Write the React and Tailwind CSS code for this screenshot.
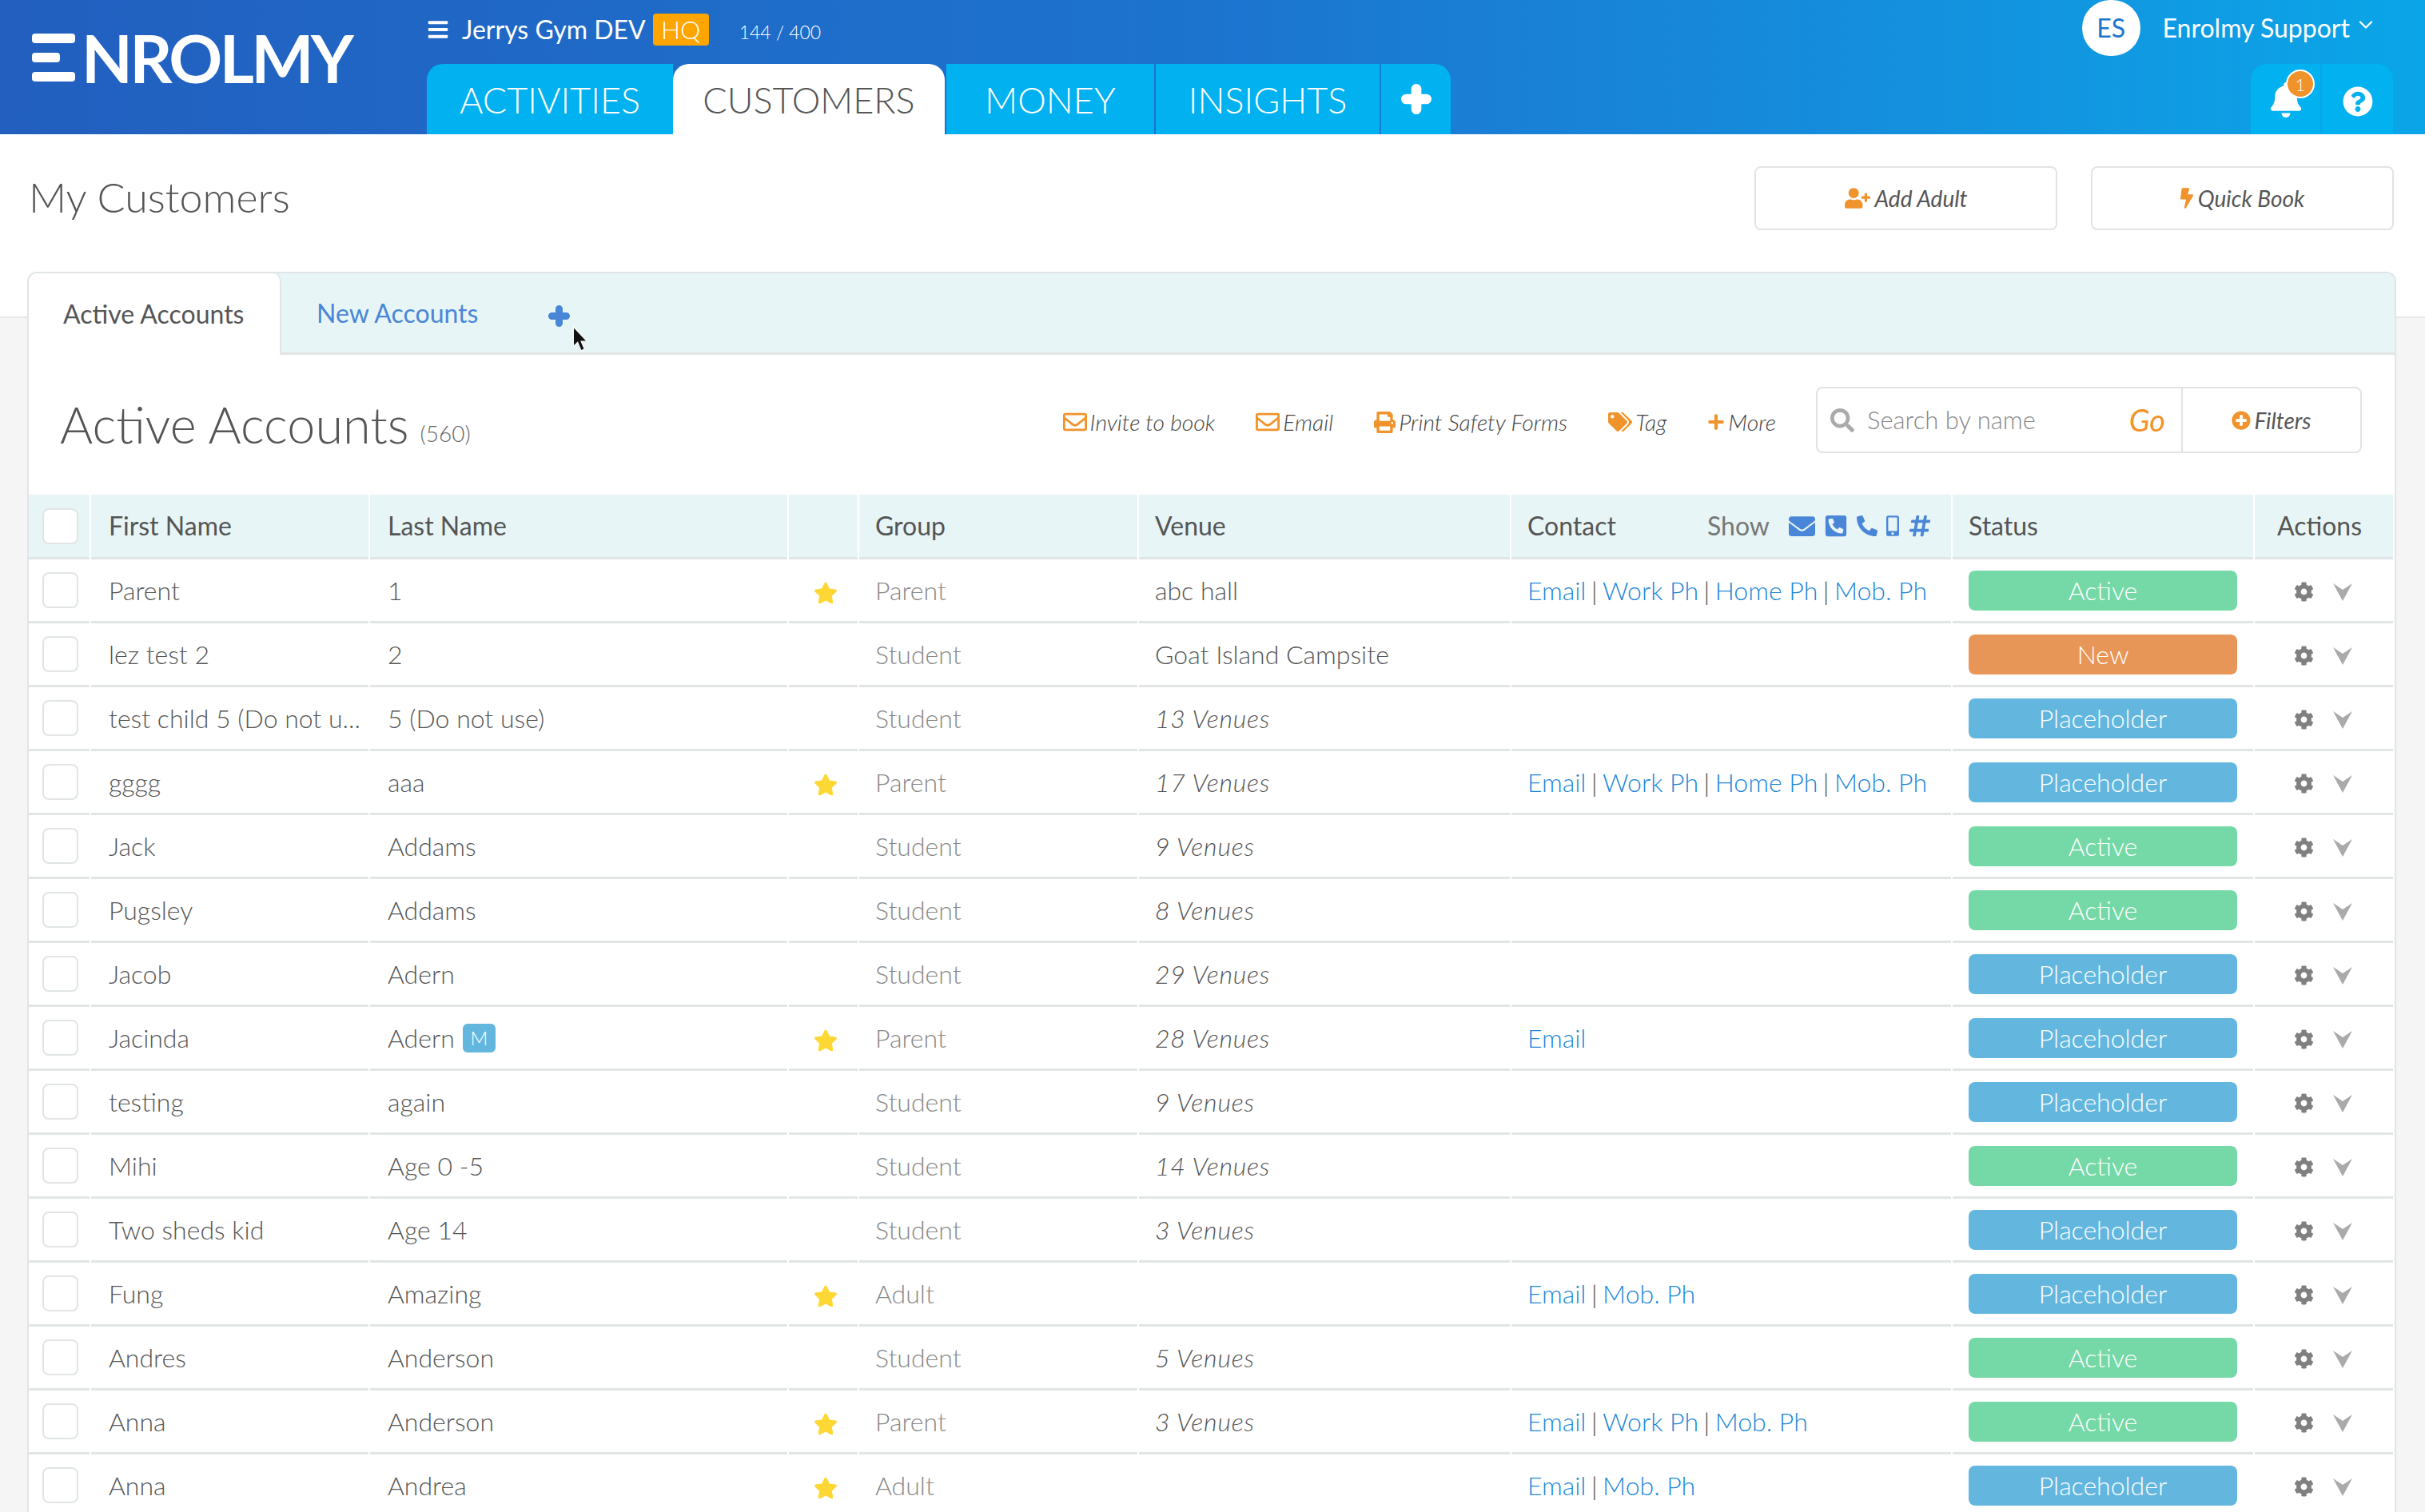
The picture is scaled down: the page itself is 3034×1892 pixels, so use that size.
import React from 'react'
import {
  FaBars, FaBell, FaBolt, FaCog, FaEnvelope, FaHashtag, FaMobileAlt, FaPhoneAlt, FaPhoneSquareAlt,
  FaPlusCircle, FaPrint, FaQuestionCircle, FaRegEnvelope, FaSearch, FaStar, FaTags, FaUserPlus, FaPlus,
} from 'react-icons/fa'
import { ChevronDown } from 'lucide-react'

const gridCols = 'grid grid-cols-[76px_347px_522px_86px_348px_464px_550px_376px_173px] gap-x-[2px]'

const statusColors = {
  Active: 'bg-[#75d8a7]',
  New: 'bg-[#e89658]',
  Placeholder: 'bg-[#63b7df]',
}

const rows = [
  { first: 'Parent', last: '1', star: true, group: 'Parent', venue: 'abc hall', contact: ['Email', 'Work Ph', 'Home Ph', 'Mob. Ph'], status: 'Active' },
  { first: 'lez test 2', last: '2', group: 'Student', venue: 'Goat Island Campsite', contact: [], status: 'New' },
  { first: 'test child 5 (Do not u...', last: '5 (Do not use)', group: 'Student', venues: '13 Venues', contact: [], status: 'Placeholder' },
  { first: 'gggg', last: 'aaa', star: true, group: 'Parent', venues: '17 Venues', contact: ['Email', 'Work Ph', 'Home Ph', 'Mob. Ph'], status: 'Placeholder' },
  { first: 'Jack', last: 'Addams', group: 'Student', venues: '9 Venues', contact: [], status: 'Active' },
  { first: 'Pugsley', last: 'Addams', group: 'Student', venues: '8 Venues', contact: [], status: 'Active' },
  { first: 'Jacob', last: 'Adern', group: 'Student', venues: '29 Venues', contact: [], status: 'Placeholder' },
  { first: 'Jacinda', last: 'Adern', badge: true, star: true, group: 'Parent', venues: '28 Venues', contact: ['Email'], status: 'Placeholder' },
  { first: 'testing', last: 'again', group: 'Student', venues: '9 Venues', contact: [], status: 'Placeholder' },
  { first: 'Mihi', last: 'Age 0 -5', group: 'Student', venues: '14 Venues', contact: [], status: 'Active' },
  { first: 'Two sheds kid', last: 'Age 14', group: 'Student', venues: '3 Venues', contact: [], status: 'Placeholder' },
  { first: 'Fung', last: 'Amazing', star: true, group: 'Adult', contact: ['Email', 'Mob. Ph'], status: 'Placeholder' },
  { first: 'Andres', last: 'Anderson', group: 'Student', venues: '5 Venues', contact: [], status: 'Active' },
  { first: 'Anna', last: 'Anderson', star: true, group: 'Parent', venues: '3 Venues', contact: ['Email', 'Work Ph', 'Mob. Ph'], status: 'Active' },
  { first: 'Anna', last: 'Andrea', star: true, group: 'Adult', contact: ['Email', 'Mob. Ph'], status: 'Placeholder' },
]

const Checkbox = () => (
  <div className="w-[45px] h-[45px] rounded-lg border-2 border-[#e1e5e5] bg-white" />
)

const ThickPlus = ({ className }) => (
  <svg viewBox="0 0 24 24" className={className} fill="none" stroke="currentColor" strokeWidth="8" strokeLinecap="round">
    <path d="M12 4v16M4 12h16" />
  </svg>
)

const Logo = () => (
  <div className="flex items-center gap-[8px] h-[60px] mt-[42px] ml-[40px]">
    <div className="flex flex-col justify-between h-[60px] w-[54px]">
      <div className="h-[12px] w-[54px] rounded bg-white" />
      <div className="h-[12px] w-[35px] rounded bg-white" />
      <div className="h-[12px] w-[54px] rounded bg-white" />
    </div>
    <span className="font-[Lato,sans-serif] font-bold text-[83px] leading-none text-white tracking-[-3.6px]">NROLMY</span>
  </div>
)

const navTabs = [
  { label: 'ACTIVITIES', width: 'w-[308px]', style: 'bg-[#01b1f0] text-white rounded-tl-[20px]' },
  { label: 'CUSTOMERS', width: 'w-[340px]', style: 'bg-white text-[#555] rounded-t-[20px]' },
  { label: 'MONEY', width: 'w-[260px] ml-[2px]', style: 'bg-[#01b1f0] text-white' },
  { label: 'INSIGHTS', width: 'w-[280px] ml-[2px]', style: 'bg-[#01b1f0] text-white' },
]

const Header = () => (
  <header className="flex h-[168px] bg-gradient-to-r from-[#225fbf] via-[#1c74cf] to-[#0aa5e8]">
    <div className="w-[534px] shrink-0">
      <Logo />
    </div>
    <div className="flex flex-col">
      <div className="flex items-center h-[80px] pb-[6px] text-white">
        <FaBars className="w-[28px] h-[28px]" />
        <span className="ml-[16px] text-[32px]">Jerrys Gym DEV</span>
        <span className="ml-[9px] h-[40px] w-[70px] rounded bg-[#ffa500] text-[32px] font-light leading-[40px] text-center">HQ</span>
        <span className="ml-[38px] mt-[6px] text-[23px] font-light">144 / 400</span>
      </div>
      <nav className="flex h-[88px]">
        {navTabs.map((tab) => (
          <div key={tab.label} className={`${tab.width} ${tab.style} flex items-center justify-center pt-[3px] text-[45px] font-light`}>
            {tab.label}
          </div>
        ))}
        <div className="w-[87px] ml-[2px] bg-[#01b1f0] rounded-tr-[20px] flex items-center justify-center text-white">
          <ThickPlus className="w-[38px] h-[38px]" />
        </div>
      </nav>
    </div>
    <div className="ml-auto mr-[40px] flex flex-col items-end">
      <div className="flex items-center h-[80px] pb-[10px] mr-[20px] text-white">
        <div className="w-[73px] h-[70px] rounded-full bg-white text-[#1f75cc] text-[32px] flex items-center justify-center">ES</div>
        <span className="ml-[28px] text-[32px]">Enrolmy Support</span>
        <ChevronDown className="ml-[6px] mb-[8px] w-[28px] h-[28px]" />
      </div>
      <div className="flex h-[88px] w-[178px] rounded-t-[20px] bg-[#01b1f0] text-white">
        <div className="relative w-[89px] flex items-center justify-center border-r-2 border-[#0aa5e8]">
          <FaBell className="w-[44px] h-[44px] mt-[2px]" />
          <span className="absolute left-[44px] top-[7px] w-[36px] h-[36px] rounded-full bg-[#f0932b] border-2 border-white text-[22px] font-light flex items-center justify-center">1</span>
        </div>
        <div className="flex-1 flex items-center justify-center">
          <FaQuestionCircle className="w-[38px] h-[38px] mt-[6px]" />
        </div>
      </div>
    </div>
  </header>
)

const PageTitle = () => (
  <div className="h-[230px] bg-white border-b-2 border-[#e4e6e6] flex items-start justify-between pl-[36px] pr-[39px]">
    <h1 className="mt-[43px] text-[52px] font-light text-[#555] leading-[70px]">My Customers</h1>
    <div className="flex gap-[42px] mt-[40px]">
      <button className="w-[379px] h-[80px] rounded-lg border-2 border-[#e1e3e5] bg-white flex items-center justify-center gap-[6px] text-[28px] italic text-[#555]">
        <FaUserPlus className="w-[32px] h-[26px] text-[#f0932b]" />
        Add Adult
      </button>
      <button className="w-[379px] h-[80px] rounded-lg border-2 border-[#e1e3e5] bg-white flex items-center justify-center gap-[6px] text-[28px] italic text-[#555]">
        <FaBolt className="w-[16px] h-[30px] text-[#f0932b]" />
        Quick Book
      </button>
    </div>
  </div>
)

const tools = [
  { label: 'Invite to book', icon: FaRegEnvelope, size: 'w-[30px] h-[30px]' },
  { label: 'Email', icon: FaRegEnvelope, size: 'w-[30px] h-[30px]' },
  { label: 'Print Safety Forms', icon: FaPrint, size: 'w-[27px] h-[27px]' },
  { label: 'Tag', icon: FaTags, size: 'w-[30px] h-[30px]' },
  { label: 'More', icon: FaPlus, size: 'w-[22px] h-[22px]' },
]

const Toolbar = () => (
  <div className="flex items-center h-[175px] pl-[39px] pr-[41px]">
    <h2 className="text-[63px] font-light text-[#555] leading-none mt-[-3px]">Active Accounts</h2>
    <span className="ml-[14px] mt-[20px] text-[28px] font-light text-[#666]">(560)</span>
    <div className="ml-auto flex items-center gap-[51px] mr-[50px] mt-[-7px] text-[28.3px] font-light italic text-[#444]">
      {tools.map(({ label, icon: Icon, size }) => (
        <span key={label} className="flex items-center gap-[4px]">
          <Icon className={`${size} text-[#f0932b]`} />
          {label}
        </span>
      ))}
    </div>
    <div className="flex items-center w-[683px] h-[83px] mt-[-12px] rounded-lg border-2 border-[#e1e3e5] bg-white">
      <FaSearch className="ml-[16px] w-[30px] h-[30px] text-[#aaa]" />
      <span className="ml-[16px] text-[31px] font-light text-[#888]">Search by name</span>
      <span className="ml-auto mr-[20px] text-[38px] italic text-[#f0932b]">Go</span>
      <div className="flex items-center justify-center gap-[4px] w-[224px] h-full border-l-2 border-[#e1e3e5] text-[28px] italic text-[#555]">
        <FaPlusCircle className="w-[24px] h-[24px] text-[#f0932b]" />
        Filters
      </div>
    </div>
  </div>
)

const headCell = 'h-[81px] bg-[#e8f5f6] border-b-[3px] border-[#dfe5e6] flex items-center text-[32px] text-[#555]'
const bodyCell = 'h-[80px] border-b-[3px] border-[#e1e5e5] flex items-center text-[32px] font-light'

const TableHead = () => (
  <div className={gridCols}>
    <div className={`${headCell} pl-[17px]`}><Checkbox /></div>
    <div className={`${headCell} pl-[22px]`}>First Name</div>
    <div className={`${headCell} pl-[22px]`}>Last Name</div>
    <div className={headCell} />
    <div className={`${headCell} pl-[20px]`}>Group</div>
    <div className={`${headCell} pl-[20px]`}>Venue</div>
    <div className={`${headCell} pl-[20px]`}>
      Contact
      <span className="ml-[114px] mr-[24px] font-normal text-[#777]">Show</span>
      <div className="flex items-center gap-[11px] text-[#4a86d8]">
        <FaEnvelope className="w-[33px] h-[33px]" />
        <FaPhoneSquareAlt className="w-[30px] h-[30px]" />
        <FaPhoneAlt className="w-[26px] h-[26px]" />
        <FaMobileAlt className="w-[16px] h-[26px]" />
        <FaHashtag className="w-[30px] h-[30px]" />
      </div>
    </div>
    <div className={`${headCell} pl-[20px]`}>Status</div>
    <div className={`${headCell} pl-[28px]`}>Actions</div>
  </div>
)

const TableRow = ({ row }) => (
  <div className={gridCols}>
    <div className={`${bodyCell} pl-[17px]`}><Checkbox /></div>
    <div className={`${bodyCell} pl-[22px] text-[#555]`}>{row.first}</div>
    <div className={`${bodyCell} pl-[22px] text-[#555]`}>
      {row.last}
      {row.badge && (
        <span className="ml-[10px] w-[41px] h-[36px] rounded-md bg-[#63b7df] text-white text-[24px] flex items-center justify-center">M</span>
      )}
    </div>
    <div className={`${bodyCell} justify-center pl-[6px]`}>
      {row.star && <FaStar className="w-[30px] h-[30px] mt-[6px] text-[#fdd835]" />}
    </div>
    <div className={`${bodyCell} pl-[20px] text-[#888]`}>{row.group}</div>
    <div className={`${bodyCell} pl-[20px] text-[#555]`}>
      {row.venues ? <span className="italic tracking-[0.8px]">{row.venues}</span> : row.venue}
    </div>
    <div className={`${bodyCell} pl-[20px] text-[#1b87d9]`}>
      {row.contact.map((item, i) => (
        <React.Fragment key={item}>
          {i > 0 && <span className="mx-[6.5px] text-[#444]">|</span>}
          {item}
        </React.Fragment>
      ))}
    </div>
    <div className={`${bodyCell} pl-[20px]`}>
      <div className={`${statusColors[row.status]} w-[336px] h-[50px] rounded-lg text-white flex items-center justify-center`}>
        {row.status}
      </div>
    </div>
    <div className={`${bodyCell} pl-[49px] gap-[24px] pt-[3px] text-[#808080]`}>
      <FaCog className="w-[25px] h-[25px]" />
      <svg viewBox="0 0 24 24" className="w-[24px] h-[24px] fill-[#aaa]">
        <path d="M0 2 L12 10 L24 2 L12 24 Z" />
      </svg>
    </div>
  </div>
)

const App = () => (
  <div className="relative h-[1892px] overflow-hidden bg-[#f5f5f5] font-[Lato,sans-serif]">
    <Header />
    <PageTitle />
    <div className="relative -mt-[58px] ml-[34px] w-[2964px] rounded-t-xl border-2 border-[#e1e5e8] bg-white">
      <div className="flex h-[102px] rounded-t-[10px] bg-[#e8f5f6] border-b-[3px] border-[#e1e5e5]">
        <div className="w-[316px] h-[102px] rounded-tl-[10px] rounded-tr-[10px] bg-white border-r-2 border-[#e1e5e5] flex items-center pl-[43px] text-[32px] text-[#555]">
          Active Accounts
        </div>
        <div className="flex items-center pl-[44px] text-[32px] text-[#4a86d8]">
          New Accounts
          <ThickPlus className="ml-[88px] mt-[8px] w-[27px] h-[27px]" />
        </div>
      </div>
      <Toolbar />
      <TableHead />
      {rows.map((row, i) => (
        <TableRow key={i} row={row} />
      ))}
      {/* mouse pointer caught in the screenshot */}
      <svg viewBox="0 0 20 32" className="absolute left-[680px] top-[66px] w-[22px] h-[34px]">
        <path d="M1 1 L1 24 L6 19 L10 29 L14 27 L10 18 L17 18 Z" fill="#111" stroke="#fff" strokeWidth="1" />
      </svg>
    </div>
  </div>
)

export default App
